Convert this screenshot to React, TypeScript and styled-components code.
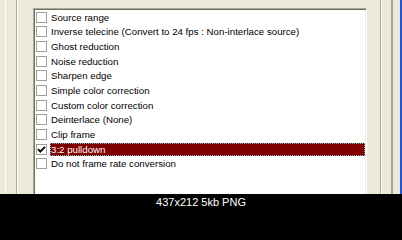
import React from "react";
import styled, { createGlobalStyle } from "styled-components";

const Global = createGlobalStyle`
  html, body { margin: 0; padding: 0; background: #000; }
  body {
    width: 402px;
    height: 211px;
    overflow: hidden;
    font-family: "Liberation Sans", Arial, sans-serif;
  }
  * { box-sizing: border-box; }
`;

const Screen = styled.div`
  display: flex;
  flex-direction: column;
  width: 402px;
  height: 211px;
`;

const Window = styled.div`
  display: flex;
  height: 194px;
  overflow: hidden;
  background: #ece9d8;
  padding: 0 7px 0 5px;
  border-right: 2px solid #2356d8;
`;

const Frame = styled.div`
  flex: 1;
  display: flex;
  border-left: 1px solid #ffffff;
  border-right: 2px solid #a7a493;
  padding: 0 9px 0 10px;
`;

const Group = styled.div`
  flex: 1;
  display: flex;
  align-items: flex-start;
  border-left: 1px solid #aca899;
  border-right: 1px solid #ffffff;
  box-shadow: inset 1px 0 0 #ffffff, inset -1px 0 0 #aca899;
  padding: 8px 14px 0 16px;
`;

const ListBox = styled.div`
  flex: 1;
  height: 200px;
  background: #ffffff;
  border: 1px solid;
  border-color: #aca899 #ffffff #ffffff #aca899;
  box-shadow: inset 1px 1px 0 #716f64, inset -1px -1px 0 #f1efe2;
  padding: 1px 1px 0 1px;
  display: flex;
  flex-direction: column;
`;

const Row = styled.div`
  display: flex;
  align-items: center;
  height: 14.67px;
  flex: none;
`;

const Box = styled.span`
  width: 11px;
  height: 11px;
  margin-left: 1px;
  border: 1px solid #a2a095;
  background: #ffffff;
  display: flex;
  align-items: center;
  justify-content: center;
  flex: none;
`;

const Label = styled.span<{ $selected?: boolean }>`
  margin-left: 3px;
  height: 13px;
  line-height: 11px;
  font-size: 9.7px;
  white-space: nowrap;
  color: ${(p) => (p.$selected ? "#ffffff" : "#000000")};
  background: ${(p) => (p.$selected ? "#800000" : "transparent")};
  border: 1px ${(p) => (p.$selected ? "dotted #6fbcbc" : "solid transparent")};
  flex: ${(p) => (p.$selected ? "1" : "none")};
`;

const Caption = styled.div`
  height: 17px;
  background: #000000;
  color: #ffffff;
  font-size: 11px;
  line-height: 17px;
  text-align: center;
`;

const items = [
  "Source range",
  "Inverse telecine (Convert to 24 fps : Non-interlace source)",
  "Ghost reduction",
  "Noise reduction",
  "Sharpen edge",
  "Simple color correction",
  "Custom color correction",
  "Deinterlace (None)",
  "Clip frame",
  "3:2 pulldown",
  "Do not frame rate conversion",
];

const Check = () => (
  <svg width="9" height="9" viewBox="0 0 9 9">
    <polyline points="1,4.2 3.3,6.6 8,1.8" fill="none" stroke="#000" strokeWidth="1.8" />
  </svg>
);

export default function App() {
  return (
    <Screen>
      <Global />
      <Window>
        <Frame>
          <Group>
            <ListBox>
              {items.map((t) => {
                const sel = t === "3:2 pulldown";
                return (
                  <Row key={t}>
                    <Box>{sel && <Check />}</Box>
                    <Label $selected={sel}>{t}</Label>
                  </Row>
                );
              })}
            </ListBox>
          </Group>
        </Frame>
      </Window>
      <Caption>437x212 5kb PNG</Caption>
    </Screen>
  );
}
